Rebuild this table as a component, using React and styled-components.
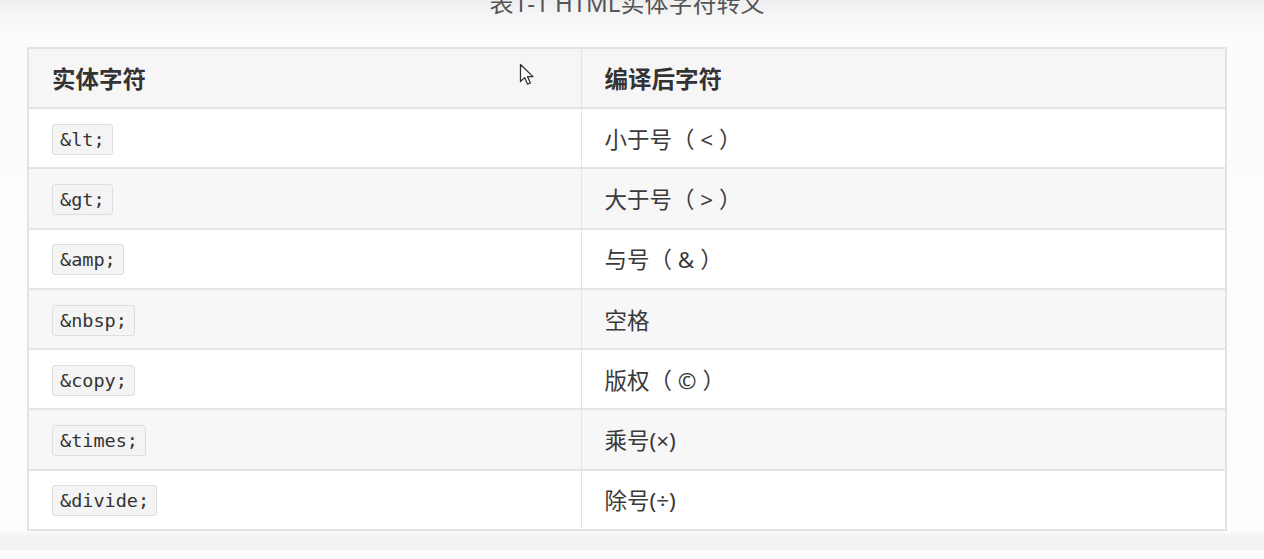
import styled, { createGlobalStyle } from "styled-components";

const GlobalStyle = createGlobalStyle`
  html, body {
    margin: 0;
    padding: 0;
    background: #fcfcfc;
  }
  body {
    font-family: "Noto Sans", "Noto Sans CJK SC", sans-serif;
    color: #333;
    overflow: hidden;
  }
`;

const rows = [
  ["&lt;", "小于号（ < ）"],
  ["&gt;", "大于号（ > ）"],
  ["&amp;", "与号（ & ）"],
  ["&nbsp;", "空格"],
  ["&copy;", "版权（ © ）"],
  ["&times;", "乘号(×)"],
  ["&divide;", "除号(÷)"],
];

export default function App() {
  return (
    <Page>
      <GlobalStyle />
      <Caption>表1-1 HTML实体字符转义</Caption>
      <Table>
        <colgroup>
          <col style={{ width: 553 }} />
          <col />
        </colgroup>
        <thead>
          <tr>
            <Th>实体字符</Th>
            <Th>编译后字符</Th>
          </tr>
        </thead>
        <tbody>
          {rows.map(([code, text], i) => (
            <Row key={code} striped={i % 2 === 1}>
              <Td>
                <Code>{code}</Code>
              </Td>
              <Td>{text}</Td>
            </Row>
          ))}
        </tbody>
      </Table>
      <Cursor width="18" height="24" viewBox="0 0 18 24">
        <path
          d="M1.5 1.5 L1.5 18.5 L5.6 14.6 L8.6 21.2 L11.4 20 L8.5 13.6 L14 13.6 Z"
          fill="#fff"
          stroke="#333"
          strokeWidth="1.3"
          strokeLinejoin="round"
        />
      </Cursor>
    </Page>
  );
}

const Page = styled.div`
  position: relative;
  width: 1264px;
  height: 559px;
  padding-left: 27px;
  box-sizing: border-box;
  background: linear-gradient(
    #eaeaea 0px,
    #f6f6f6 25px,
    #fcfcfc 44px,
    #fdfdfd 538px,
    #f3f3f3 546px,
    #f3f3f3 100%
  );
`;

const Caption = styled.div`
  width: 1200px;
  height: 24px;
  margin-top: -9px;
  margin-bottom: 32px;
  text-align: center;
  font-size: 24px;
  line-height: 24px;
  color: #555;
`;

const Table = styled.table`
  width: 1200px;
  border-collapse: collapse;
  table-layout: fixed;
  border: 2px solid #e3e3e3;
`;

const Th = styled.th`
  height: 58px;
  padding: 0 0 0 23px;
  text-align: left;
  font-size: 23.5px;
  font-weight: 700;
  color: #333;
  background: #f6f6f6;
  border: 1px solid #e3e3e3;
  border-bottom-width: 2px;
`;

const Row = styled.tr`
  background: ${(p) => (p.striped ? "#f7f7f7" : "#fff")};
`;

const Td = styled.td`
  height: 58.3px;
  padding: 0 0 0 23px;
  font-size: 22.5px;
  color: #3a3a3a;
  border: 1px solid #e3e3e3;
  border-top-width: 2px;
  vertical-align: middle;
`;

const Code = styled.code`
  display: inline-block;
  padding: 0 7px;
  font-family: "DejaVu Sans Mono", "Liberation Mono", monospace;
  font-size: 18.5px;
  line-height: 29px;
  color: #333;
  background: #f4f4f4;
  border: 1px solid #dedede;
  border-radius: 3px;
`;

const Cursor = styled.svg`
  position: absolute;
  left: 519px;
  top: 72px;
`;
